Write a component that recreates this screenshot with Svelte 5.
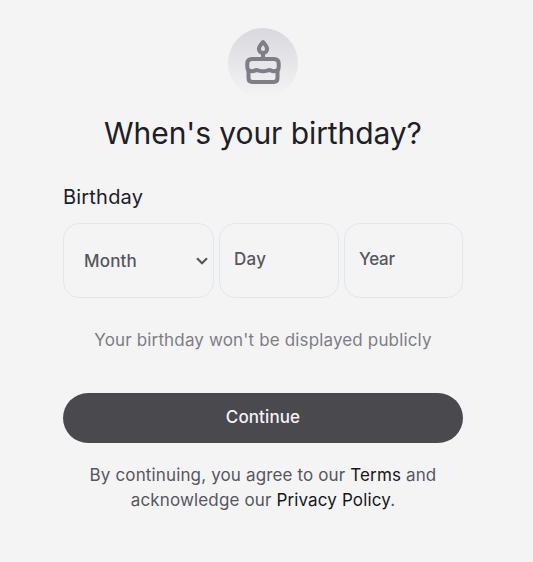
<script>
  const months = ['January', 'February', 'March', 'April', 'May', 'June', 'July', 'August', 'September', 'October', 'November', 'December'];
  let month = $state('');
  let day = $state('');
  let year = $state('');
</script>

<main>
  <div class="badge">
    <svg width="70" height="70" viewBox="0 0 70 70" fill="none" stroke="#7e7d88" stroke-width="4" stroke-linejoin="round" aria-hidden="true">
      <path d="M35 14 C33 16.4 30.9 18.2 30.9 20.9 A4.1 4 0 0 0 39.1 20.9 C39.1 18.2 37 16.4 35 14Z" />
      <path d="M35 25V31" />
      <path d="M20.4 42.3C19.6 41.5 19.3 40.5 19.3 39V35.7Q19.3 30.9 24.1 30.9H45.9Q50.7 30.9 50.7 35.7V39C50.7 40.5 50.4 41.5 49.6 42.3" />
      <path d="M20.4 41.6C22.5 43.6 25.5 43.4 27.5 42.2C29.5 41.6 31.5 43.3 35 43.3C38.5 43.3 40.5 41.6 42.5 42.2C44.5 43.4 47.5 43.6 49.6 41.6" />
      <path d="M20.5 42V50Q20.5 53.9 24.4 53.9H45.6Q49.5 53.9 49.5 50V42" />
    </svg>
  </div>
  <h1>When's your birthday?</h1>
  <form onsubmit={(e) => e.preventDefault()}>
    <label class="legend" for="month">Birthday</label>
    <div class="fields">
      <div class="field month">
        <select id="month" bind:value={month}>
          <option value="">Month</option>
          {#each months as name}
            <option value={name}>{name}</option>
          {/each}
        </select>
        <svg class="chevron" width="12" height="8" viewBox="0 0 12 8" fill="none" stroke="#57565f" stroke-width="2.2" aria-hidden="true"><path d="M1 1.2L6 6.2L11 1.2" /></svg>
      </div>
      <input class="field day" placeholder="Day" bind:value={day} />
      <input class="field year" placeholder="Year" bind:value={year} />
    </div>
    <p class="note">Your birthday won't be displayed publicly</p>
    <button>Continue</button>
  </form>
  <p class="terms">
    By continuing, you agree to our <b>Terms</b> and<br />
    acknowledge our <b>Privacy Policy</b>.
  </p>
</main>

<style>
  :global(body) { background: #f4f4f4; }
  main {
    box-sizing: border-box;
    width: 400px;
    height: 562px;
    margin-left: 63px;
    padding-top: 28px;
    display: flex;
    flex-direction: column;
    align-items: center;
    font-family: Inter, "Liberation Sans", sans-serif;
    color: #202024;
    white-space: nowrap;
  }
  .badge {
    width: 70px;
    height: 70px;
    border-radius: 50%;
    background: linear-gradient(#d9d8de, #f4f4f4);
  }
  .badge svg { display: block; }
  h1 {
    margin: 15px 0 0;
    font-size: 30px;
    line-height: 40px;
    font-weight: 400;
    letter-spacing: -0.08px;
  }
  form { width: 100%; }
  .legend {
    display: block;
    margin: 30px 0 12px;
    height: 28px;
    line-height: 28px;
    font-size: 20px;
    letter-spacing: 0.2px;
  }
  .fields { display: flex; gap: 5px; }
  .field {
    box-sizing: border-box;
    height: 75px;
    border: 1px solid #e1e7f1;
    border-radius: 16px;
    background: transparent;
    font: 500 17px Inter, sans-serif;
    color: #57565f;
    outline: none;
  }
  .month { width: 151px; display: flex; align-items: center; padding: 0 5px 0 20px; }
  select {
    appearance: none;
    flex: 1;
    min-width: 0;
    height: 100%;
    border: 0;
    padding: 0;
    background: none;
    font: inherit;
    letter-spacing: 0.2px;
    color: inherit;
    outline: none;
  }
  .day { width: 120px; padding: 0 14px 3px; letter-spacing: 0.3px; }
  .year { width: 119px; padding: 0 14px 3px; letter-spacing: -0.2px; }
  input::placeholder { color: #57565f; opacity: 1; }
  .note {
    margin: 30px 0 0;
    text-align: center;
    font-size: 17px;
    line-height: 25px;
    letter-spacing: 0.15px;
    color: #7e7d88;
  }
  button {
    display: block;
    width: 400px;
    height: 50px;
    margin-top: 40px;
    padding: 0 0 2px;
    border: 0;
    border-radius: 25px;
    background: #4a494e;
    color: #f4f4f4;
    font: 500 17px Inter, sans-serif;
    letter-spacing: 0.1px;
  }
  .terms {
    margin: 20px 0 0;
    text-align: center;
    font-size: 17px;
    line-height: 25px;
    letter-spacing: 0.14px;
    color: #57565f;
  }
  b { font-weight: 400; color: #17171a; }
</style>
